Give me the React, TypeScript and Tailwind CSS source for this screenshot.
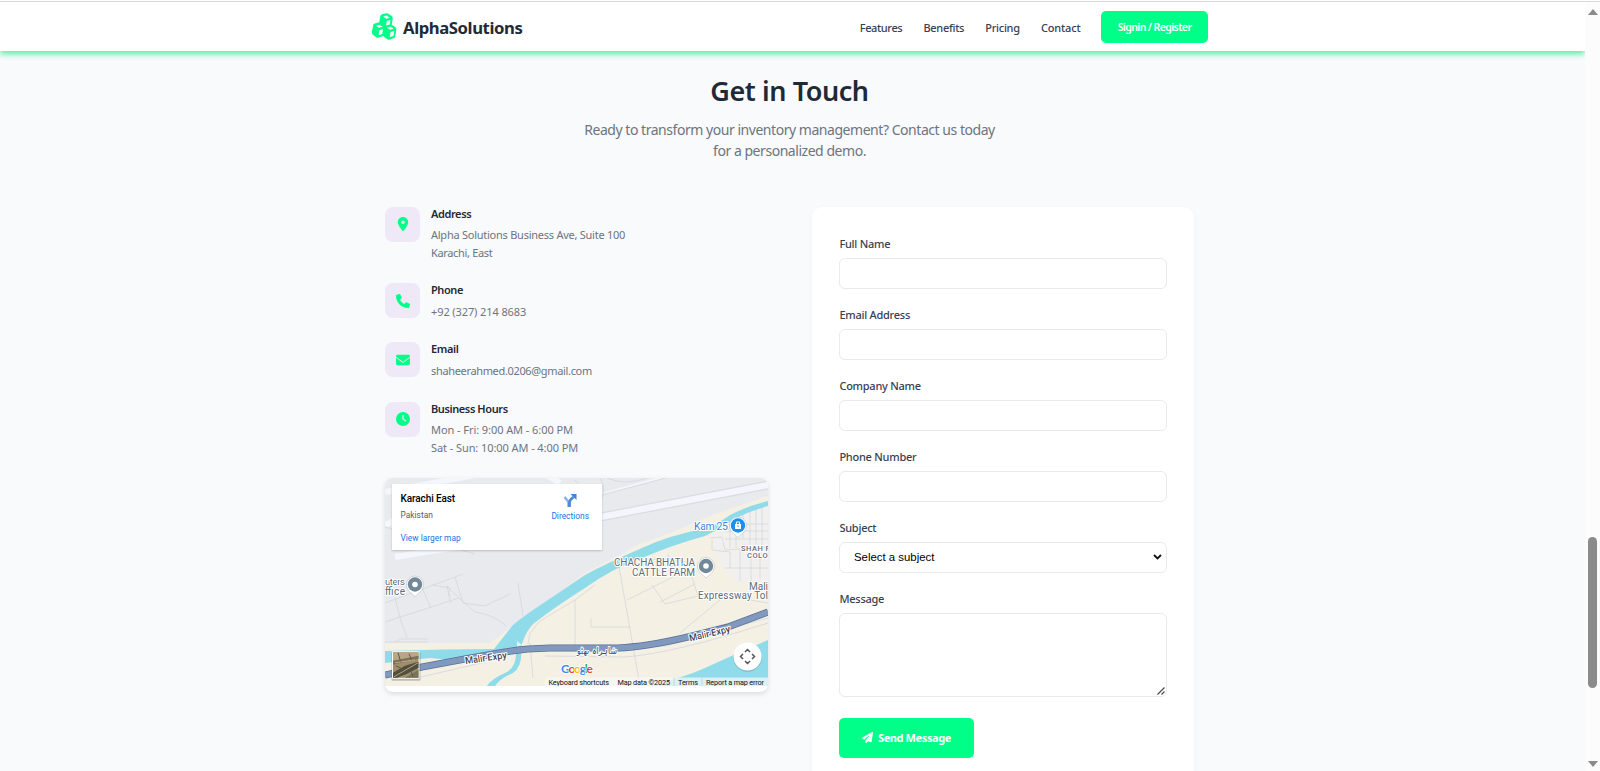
import type { ReactNode } from "react";
import { FaClock, FaCubes, FaEnvelope, FaLocationDot, FaPaperPlane, FaPhone } from "react-icons/fa6";

function Header() {
  return (
    <header className="relative z-10 h-[49px] shrink-0 bg-white pr-[5px] shadow-[0_3px_6px_rgba(0,230,120,0.65)]">
      <div className="mx-auto flex h-full w-[836px] items-center justify-between">
        <div className="flex items-center gap-[6px]">
          <FaCubes preserveAspectRatio="none" className="-mt-[1px] ml-px h-[26px] w-[24px] rotate-[10deg] text-[#00ff88]" />
          <span className="pt-[3px] text-[16.7px] font-bold tracking-[-0.42px] text-[#212b38]">AlphaSolutions</span>
        </div>
        <nav className="flex items-center text-[11px] font-medium text-[#374151]">
          <a className="mt-[3px] mr-[21.2px] tracking-[-0.38px]">Features</a>
          <a className="mt-[3px] mr-[21.2px] tracking-[-0.33px]">Benefits</a>
          <a className="mt-[3px] mr-[21.2px] tracking-[-0.27px]">Pricing</a>
          <a className="mt-[3px] mr-[20.5px] tracking-[-0.17px]">Contact</a>
          <a className="mt-px flex h-8 w-[107px] items-center justify-center rounded-[5px] bg-[#00ff88] pt-[2px] text-[10.5px] font-semibold tracking-[-0.6px] text-white">
            Signin / Register
          </a>
        </nav>
      </div>
    </header>
  );
}

function InfoItem({ icon, title, children }: { icon: ReactNode; title: string; children: ReactNode }) {
  return (
    <div className="flex gap-[11px]">
      <div className="flex size-[35px] shrink-0 items-center justify-center rounded-[8px] bg-[#efe8f6] text-[14px] text-[#00ff88]">
        {icon}
      </div>
      <div>
        <h3 className="text-[11px] leading-[13.4px] font-semibold tracking-[-0.4px] text-[#1f2937]">{title}</h3>
        <div className="mt-[6.2px] mb-[0.4px] text-[11px] leading-[17.7px] text-[#6c757d]">{children}</div>
      </div>
    </div>
  );
}

function Pin({ x, y, color, children }: { x: number; y: number; color: string; children: ReactNode }) {
  return (
    <g transform={`translate(${x} ${y})`}>
      <path d="M0 12 C-3 9 -8.5 6 -8.5 0 A8.5 8.5 0 1 1 8.5 0 C8.5 6 3 9 0 12Z" fill="#fff" stroke="#b9bec4" strokeWidth=".6" />
      <circle r="7.2" fill={color} />
      {children}
    </g>
  );
}

function MapDrawing() {
  return (
    <svg width="383" height="208" viewBox="0 0 383 208" className="block" fontFamily="Roboto, sans-serif">
      <rect width="383" height="208" fill="#e8eaed" />
      <path d="M0 165H105L135 143L200 95L255 66L290 53L330 36L383 18V208H0Z" fill="#f5f0e4" />
      <path d="M327 50L345 38L383 27V105H352L330 78Z" fill="#f1f0ee" />
      <g fill="none" stroke="#f4f6fd">
        <path d="M0 14L90 -3M0 47L8 43L12 60M10 79L90 66M160 -4L175 5" strokeWidth="6" />
        <path d="M200 42L383 7" strokeWidth="6" />
        <path d="M205 19L290 -4" strokeWidth="2" />
      </g>
      <g fill="none" stroke="#d3d7dd" strokeWidth=".8">
        <path d="M200 38L383 3M200 46L383 11M205 20L292 -3M0 49L90 76" />
        <path d="M215 0Q222 12 216 22M222 0Q240 8 262 0M190 2L205 20" />
        <path d="M0 144L74 120M0 125L78 96M10 120L16 143L22 160M38 112L46 130M62 108L66 125M70 99L78 125M0 164H43M10 164L16 161H43M74 120L62 108M74 120L90 134Q110 137 121 148M78 125L100 128L125 116M133 105L138 138M47 107L65 110L63 118" />
        <path d="M143 166L145 155L155 143L190 122L210 107M190 122V167M148 200L145 165" />
        <path d="M233 83L255 208M242 122L290 98L283 76M267 107L280 126L313 118L302 84M275 124L310 106M206 140V149H245M295 155L340 118L383 125M258 85L274 80L302 84M240 168H280L383 140" />
        <path d="M325 60L337 59L340 72L383 69M345 38V70M351 36V70M358 33V60M365 31V70M371 30V66M377 29V70M335 46H383M340 53H383M340 61H383M355 70V103M366 70V103M375 70V100M340 90H383M327 62V72L345 74V90" />
      </g>
      <path d="M383 23Q360 29 345 37Q330 48 318 51Q285 57 257 70Q222 85 200 97L160 124Q140 137 128 147L109 171Q60 171 0 173V185L45 180L84 184L112 175L131 172Q132 188 122 194Q106 201 102 208H110Q116 200 128 195Q138 188 136 169Q142 149 152 143Q170 129 200 110Q228 90 257 80Q290 66 320 58Q337 50 349 41Q365 33 383 28Z" fill="#8fdbea" />
      <path d="M383 162V208H265Q300 199 320 190Q350 176 383 162Z" fill="#8fdbea" />
      <path d="M132 163L137 167L132 169Z" fill="#fff" opacity=".7" />
      <path d="M36 199L100 184M160 178L240 179Q290 175 383 145" fill="none" stroke="#d3d5dc" strokeWidth=".8" />
      <g fill="none" strokeLinejoin="round">
        <path d="M0 197L37 189L80 181L120 174Q140 170.500 165 170H233Q260 169 303 159L343 149L383 134" stroke="#586f96" strokeWidth="7" />
        <path d="M0 197L37 189L80 181L120 174Q140 170.500 165 170H233Q260 169 303 159L343 149L383 134" stroke="#8299bf" strokeWidth="5.400" />
      </g>

      <g fill="#5f6b78" stroke="#fff" strokeWidth="2" strokeLinejoin="round" paintOrder="stroke">
        <text x="310" y="87.500" textAnchor="end" fontSize="10" textLength="81">CHACHA BHATIJA</text>
        <text x="310" y="98" textAnchor="end" fontSize="10" textLength="63">CATTLE FARM</text>
        <text x="364" y="111.500" fontSize="10">Mali</text>
        <text x="313" y="121" fontSize="10" textLength="70">Expressway Tol</text>
        <text x="0" y="106.500" fontSize="9.500" textLength="20">uters</text>
        <text x="0" y="116.500" fontSize="10" textLength="20">ffice</text>
        <text x="309" y="52" fontSize="10.500" fill="#3c82dc" textLength="34">Kam 25</text>
        <text x="356" y="72.500" fontSize="7.500" fontWeight="500" letterSpacing=".5">SHAH F</text>
        <text x="362" y="80" fontSize="7.500" fontWeight="500" letterSpacing=".5">COLO</text>
        <g fill="#3c4654" fontSize="9.500" fontWeight="500" strokeWidth="2">
          <text transform="translate(80.500 186) rotate(-8)" textLength="42">Malir Expy</text>
          <text transform="translate(305 163.500) rotate(-13.500)" textLength="42">Malir Expy</text>
          <text x="212" y="175.500" textAnchor="middle" fontSize="9.500" fontFamily="'DejaVu Sans', sans-serif" textLength="40" lengthAdjust="spacingAndGlyphs">شاہراہ بھٹو</text>
        </g>
      </g>

      <Pin x={30} y={106.5} color="#718896">
        <circle r="2.800" fill="#fff" />
      </Pin>
      <Pin x={321} y={88} color="#718896">
        <circle r="2.800" fill="#fff" />
      </Pin>
      <Pin x={353} y={47.5} color="#1a8ff0">
        <path d="M-3 -1.500H3V3.500H-3Z" fill="#fff" />
        <path d="M-1.600 -1.500V-3.500H1.600V-1.500" fill="none" stroke="#fff" strokeWidth="1" />
        <path d="M-1 .6H1" stroke="#1a8ff0" strokeWidth=".8" />
      </Pin>

      <rect x="160" y="199.500" width="223" height="8.500" fill="#f7f7f7" opacity=".75" />
      <g fill="#111" fontSize="7.300">
        <text x="163.500" y="206.500" textLength="60.500">Keyboard shortcuts</text>
        <text x="232.500" y="206.500" textLength="52.500">Map data ©2025</text>
        <text x="293" y="206.500" textLength="20">Terms</text>
        <text x="321" y="206.500" textLength="58">Report a map error</text>
      </g>
      <path d="M289 199.500V208M317 199.500V208" stroke="#b8dbe2" strokeWidth="1" />
      <text x="176" y="195" fontFamily="Lato, sans-serif" fontSize="12" fontWeight="700" textLength="32" stroke="#fff" strokeWidth="1.500" paintOrder="stroke">
        <tspan fill="#4285f4">G</tspan>
        <tspan fill="#ea4335">o</tspan>
        <tspan fill="#fbbc04">o</tspan>
        <tspan fill="#4285f4">g</tspan>
        <tspan fill="#34a853">l</tspan>
        <tspan fill="#ea4335">e</tspan>
      </text>

      <g transform="translate(0 .8)">
        <rect x="6.500" y="173" width="29" height="29" rx="1.500" fill="#000" opacity=".22" />
        <rect x="7" y="172.500" width="27.500" height="27.500" rx="1" fill="#fff" />
        <rect x="8" y="173.500" width="25.500" height="25.500" fill="#a08d6d" />
        <path d="M8 173.500H33.500V179L8 182Z" fill="#b9a684" />
        <path d="M8 182L33.500 177V180L8 186Z" fill="#7c7058" />
        <path d="M8 194L20 187L33.500 183V189L22 195L12 199H8Z" fill="#4f4f3c" />
        <path d="M20 199L33.500 191V199Z" fill="#78745a" />
        <path d="M13 174L16 184M24 175L27 182M11 187L17 190M25 190L28 198" stroke="#5f5843" strokeWidth="1" />
        <path d="M9 198L33 184M10 184L30 181" stroke="#cbb893" strokeWidth=".8" />
      </g>

      <circle cx="362.500" cy="179.500" r="14.300" fill="#000" opacity=".14" />
      <circle cx="362.500" cy="178.500" r="14" fill="#fff" />
      <path d="M360 174L362.500 171.500L365 174M360 183L362.500 185.500L365 183M358 176L355.500 178.500L358 181M367 176L369.500 178.500L367 181" fill="none" stroke="#555" strokeWidth="1.500" />
    </svg>
  );
}

function MapCard() {
  return (
    <div className="relative h-[214px] w-[383px] overflow-hidden rounded-[8px] bg-white shadow-[0_2px_5px_rgba(0,0,0,0.12)]">
      <MapDrawing />
      <div className="absolute top-[6px] left-[7px] flex h-[66px] w-[210px] justify-between bg-white pt-[8px] pr-[13px] pl-[8.5px] font-['Roboto',sans-serif] shadow-[0_1px_2px_rgba(0,0,0,0.2)]">
        <div className="flex flex-col">
          <span className="text-[10px] leading-[13px] font-medium tracking-[-0.1px] text-black">Karachi East</span>
          <span className="mt-[5px] text-[8.4px] leading-[10px] text-[#5b5b5b]">Pakistan</span>
          <a className="mt-[13px] text-[8.4px] leading-[10px] text-[#1a73e8]">View larger map</a>
        </div>
        <div className="flex flex-col items-center pt-[2px]">
          <svg width="14" height="13" viewBox="0 0 14 13">
            <path d="M5.500 13V8L1.500 3" fill="none" stroke="#8ab4f0" strokeWidth="2.600" />
            <path d="M6.500 13V8.500Q6.500 6.500 8 5.200L10.500 3" fill="none" stroke="#4a88e0" strokeWidth="2.800" />
            <path d="M7.500 0H13.500V6Z" fill="#3f80dc" />
          </svg>
          <a className="mt-[4px] text-[8.4px] leading-[10px] text-[#1a73e8]">Directions</a>
        </div>
      </div>
    </div>
  );
}

function Field({ label, children }: { label: string; children: ReactNode }) {
  return (
    <div className="mb-[20px] flex flex-col">
      <label className="mb-[8px] pl-[0.4px] text-[11px] leading-[12px] font-medium tracking-[-0.25px] text-[#374151]">{label}</label>
      {children}
    </div>
  );
}

function ContactForm() {
  const input = "block h-[31px] w-[328px] rounded-[6px] border border-[#e9eaec] bg-white outline-none";
  return (
    <form className="h-[640px] w-[382px] rounded-[11px] bg-white px-[27px] pt-[31.3px] shadow-[0_3px_10px_rgba(0,0,0,0.03)]">
      <Field label="Full Name"><input className={input} /></Field>
      <Field label="Email Address"><input className={input} /></Field>
      <Field label="Company Name"><input className={input} /></Field>
      <Field label="Phone Number"><input className={input} /></Field>
      <Field label="Subject">
        <div className="flex h-[31px] w-[328px] items-center justify-between rounded-[6px] border border-[#e9eaec] pr-[4px] pl-[14px]">
          <span className="font-['Liberation_Sans',sans-serif] text-[11.4px] text-black">Select a subject</span>
          <svg width="9" height="6" viewBox="0 0 9 6">
            <path d="M1 1L4.500 4.500L8 1" fill="none" stroke="#111" strokeWidth="1.800" />
          </svg>
        </div>
      </Field>
      <Field label="Message">
        <div className="relative">
          <textarea className="block h-[84px] w-[328px] resize-none rounded-[6px] border border-[#e9eaec] bg-white outline-none" />
          <svg className="absolute right-[2px] bottom-[2px]" width="8" height="8" viewBox="0 0 8 8">
            <path d="M.5 7.500L7.500 .5M4.500 7.500L7.500 4.500" stroke="#444" strokeWidth="1.100" />
          </svg>
        </div>
      </Field>
      <button className="mt-[21px] flex h-10 w-[135px] items-center justify-center gap-[5px] rounded-[5px] bg-[#00ff88] pt-px text-[11px] font-bold tracking-[-0.39px] text-white">
        <FaPaperPlane className="-mt-[2px] size-[11px]" />
        Send Message
      </button>
    </form>
  );
}

export default function App() {
  return (
    <div className="flex h-[771px] w-full flex-col overflow-hidden bg-white font-['Noto_Sans',sans-serif]">
      <div className="mt-px h-px shrink-0 bg-[#d9dbd9]" />
      <div className="flex min-h-0 flex-1">
        <div className="flex min-w-0 flex-1 flex-col overflow-hidden bg-[#f9fafc]">
          <Header />
          <main className="flex flex-col items-center pr-[6px] pt-[21px]">
            <h1 className="text-[27px] leading-[38px] font-semibold tracking-[-0.42px] text-[#1f2937]">Get in Touch</h1>
            <p className="mt-[9px] text-center text-[14px] leading-[21.2px] tracking-[-0.46px] text-[#6c757d]">
              Ready to transform your inventory management? Contact us today
              <br />
              for a personalized demo.
            </p>
            <div className="mt-[45.2px] flex w-[809px] items-start justify-between">
              <div className="flex flex-col gap-[21.4px]">
                <InfoItem icon={<FaLocationDot />} title="Address">
                  <p className="tracking-[-0.25px]">Alpha Solutions Business Ave, Suite 100</p>
                  <p className="tracking-[-0.34px]">Karachi, East</p>
                </InfoItem>
                <InfoItem icon={<FaPhone />} title="Phone">
                  <p className="tracking-[-0.1px]">+92 (327) 214 8683</p>
                </InfoItem>
                <InfoItem icon={<FaEnvelope />} title="Email">
                  <p className="tracking-[-0.34px]">shaheerahmed.0206@gmail.com</p>
                </InfoItem>
                <InfoItem icon={<FaClock />} title="Business Hours">
                  <p className="tracking-[-0.07px]">Mon - Fri: 9:00 AM - 6:00 PM</p>
                  <p className="tracking-[-0.08px]">Sat - Sun: 10:00 AM - 4:00 PM</p>
                </InfoItem>
                <MapCard />
              </div>
              <ContactForm />
            </div>
          </main>
        </div>
        <div className="flex w-[15px] shrink-0 flex-col items-center bg-[#fcfcfc] pt-[7px] pb-[4px]">
          <svg width="10" height="6" viewBox="0 0 10 6"><path d="M0 6L5 0L10 6Z" fill="#8b8b8b" /></svg>
          <div className="mt-[522px] h-[151px] w-[9px] rounded-full bg-[#8b8b8b]" />
          <svg className="mt-auto" width="10" height="6" viewBox="0 0 10 6"><path d="M0 0L5 6L10 0Z" fill="#8b8b8b" /></svg>
        </div>
      </div>
    </div>
  );
}
